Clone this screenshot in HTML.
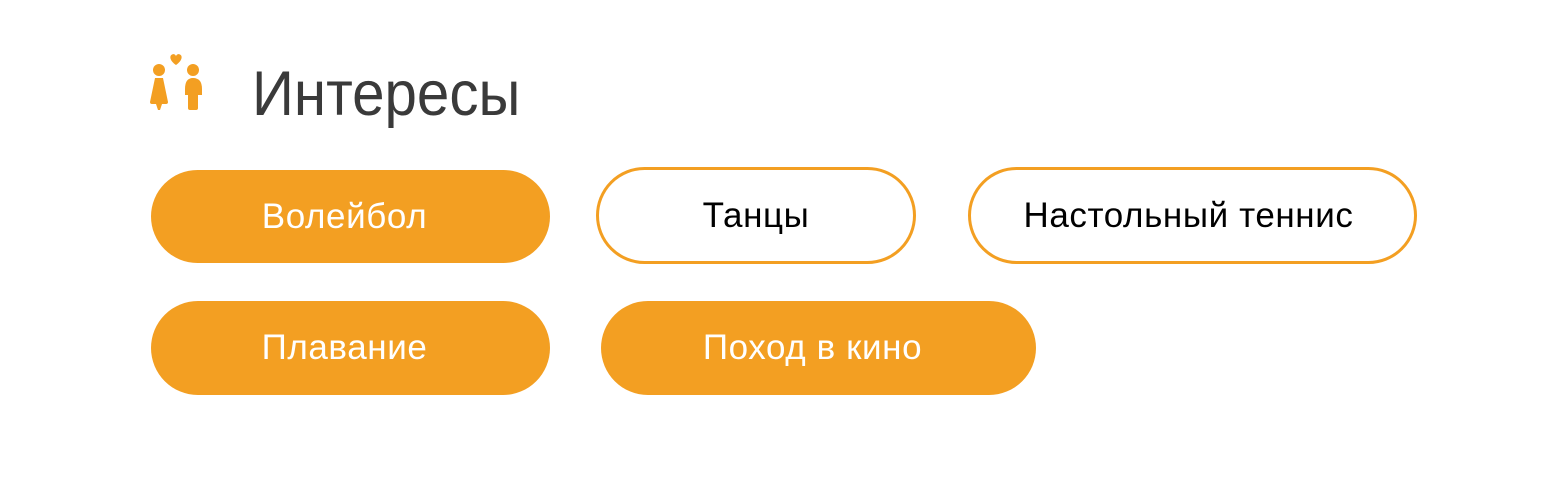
<!DOCTYPE html>
<html><head><meta charset="utf-8"><style>
body{margin:0;width:1562px;height:502px;background:#fff;font-family:"Liberation Sans",Arial,sans-serif;position:relative;overflow:hidden}
.t{position:absolute;left:252px;top:56px;font-size:63px;color:#3a3a3a;line-height:76px;transform:scaleX(0.925);transform-origin:left center}
.p{position:absolute;box-sizing:border-box;border-radius:50px;font-size:35px;letter-spacing:0.6px;display:flex;align-items:center;justify-content:center;white-space:nowrap}
.f{background:#f39f22;color:#fff;padding-right:12px}
.o{border:3px solid #f39f22;color:#000;background:#fff}
</style></head><body>
<svg style="position:absolute;left:140px;top:45px" width="80" height="75" viewBox="0 0 80 75">
<g fill="#f39f22">
<path d="M36 20 C30 16 29 11 32 9.5 C34 8.5 36 10 36 11.5 C36 10 38 8.5 40 9.5 C43 11 42 16 36 20Z"/>
<circle cx="19" cy="25" r="6"/>
<path d="M15 33 H23 L28 57 Q28 59 26 59 H22 L20 65 H18 L16 59 H12 Q10 59 10 57Z"/>
<circle cx="53" cy="25" r="6"/>
<path d="M45 44 Q45 33 53 33 Q62 33 62 44 V50 H58 V63 Q58 65 56 65 H50 Q48 65 48 63 V50 H45Z"/>
</g></svg>
<div class="t">Интересы</div>
<div class="p f" style="left:151px;top:170px;width:399px;height:93px">Волейбол</div>
<div class="p o" style="left:596px;top:167px;width:320px;height:97px">Танцы</div>
<div class="p o" style="left:968px;top:167px;width:449px;height:97px;padding-right:8px">Настольный теннис</div>
<div class="p f" style="left:151px;top:301px;width:399px;height:94px">Плавание</div>
<div class="p f" style="left:601px;top:301px;width:435px;height:94px">Поход в кино</div>
</body></html>
